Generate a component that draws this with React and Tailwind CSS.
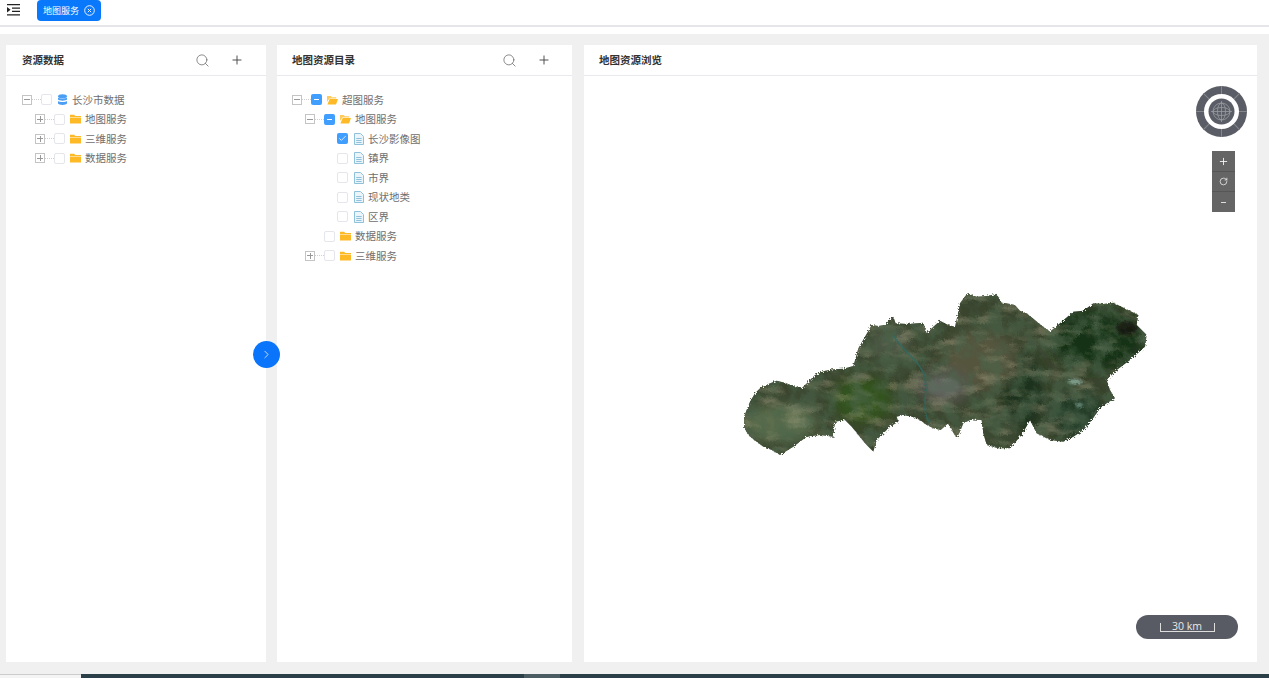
import React from "react";
import { Search, Plus, Check, ChevronRight, RotateCw } from "lucide-react";

const cjk = "font-['Noto_Sans_CJK_SC','Noto_Sans',sans-serif]";

const sourceTree = [
  {
    label: "长沙市数据",
    icon: "db",
    open: true,
    children: [
      { label: "地图服务", icon: "folder", closed: true },
      { label: "三维服务", icon: "folder", closed: true },
      { label: "数据服务", icon: "folder", closed: true },
    ],
  },
];

const catalogTree = [
  {
    label: "超图服务",
    icon: "open",
    open: true,
    state: "half",
    children: [
      {
        label: "地图服务",
        icon: "open",
        open: true,
        state: "half",
        children: [
          { label: "长沙影像图", icon: "file", state: "on", leaf: true },
          { label: "镇界", icon: "file", leaf: true },
          { label: "市界", icon: "file", leaf: true },
          { label: "现状地类", icon: "file", leaf: true },
          { label: "区界", icon: "file", leaf: true },
        ],
      },
      { label: "数据服务", icon: "folder", leaf: true },
      { label: "三维服务", icon: "folder", closed: true },
    ],
  },
];

const outline =
  "42,410 52,385 60,365 75,340 90,325 115,312 140,302 165,308 190,318 215,325 235,305 255,285 285,272 310,268 340,266 370,258 378,230 385,205 405,170 425,135 445,138 465,135 478,120 490,110 497,130 535,132 580,128 590,160 610,140 630,122 655,135 675,140 684,100 690,70 712,40 740,50 770,48 800,42 815,68 830,70 855,75 870,92 890,100 925,128 960,155 995,125 1030,95 1060,92 1090,70 1120,72 1150,68 1190,88 1225,105 1220,135 1250,165 1245,200 1200,240 1160,270 1130,300 1140,330 1155,355 1130,370 1110,385 1085,420 1060,450 1030,470 1000,485 960,480 920,460 900,420 875,465 840,505 805,505 770,495 760,460 755,420 725,418 700,430 690,455 680,475 665,450 655,430 632,450 610,445 590,435 570,420 545,410 520,405 500,410 505,425 480,440 460,460 440,480 430,515 405,490 385,465 365,440 345,420 315,425 310,470 270,465 230,470 190,500 150,525 125,510 100,500 80,485 60,470 42,445";

const DbIcon = () => (
  <svg width="11" height="12" viewBox="0 0 11 12" fill="#4a9ff5">
    <ellipse cx="5.5" cy="2.2" rx="4.5" ry="2" />
    <path d="M1 3.6c1 1.3 8 1.3 9 0v2c-1 1.4-8 1.4-9 0z" />
    <path d="M1 7c1 1.3 8 1.3 9 0v2.6c-.6 1.9-8.4 1.9-9 0z" />
  </svg>
);

const FolderIcon = () => (
  <svg width="11" height="10" viewBox="0 0 11 10" fill="#fdb926">
    <path d="M0 .8h4.2l1 1.2H11v.9H0z" />
    <path d="M0 3.5h11v6H0z" />
  </svg>
);

const OpenFolderIcon = () => (
  <svg width="11" height="10" viewBox="0 0 11 10" fill="#fdb926">
    <path d="M0 1h3.8l1 1.2h4.4v1.2H2.4L0 7z" opacity=".75" />
    <path d="M2.7 4H11L9 9.5H.4z" />
  </svg>
);

const FileIcon = () => (
  <svg width="10" height="12" viewBox="0 0 10 12" fill="#eaf4f9" stroke="#8fc2da" strokeWidth="1">
    <path d="M.5.5h6l3 3v8h-9z" />
    <path d="M2.2 5.5h5.4M2.2 7.5h5.4M2.2 9.5h5.4" fill="none" />
  </svg>
);

const icons = {
  db: <DbIcon />,
  folder: <FolderIcon />,
  open: <OpenFolderIcon />,
  file: <FileIcon />,
};

const Expander = ({ open }) => (
  <span className="relative w-[10px] h-[10px] border border-[#c4c4c4] bg-white shrink-0">
    <span className="absolute left-[1px] right-[1px] top-[3.5px] h-px bg-[#999]" />
    {!open && <span className="absolute top-[1px] bottom-[1px] left-[3.5px] w-px bg-[#999]" />}
  </span>
);

const Checkbox = ({ state }) => {
  if (state === "on") {
    return (
      <span className="flex items-center justify-center w-[11px] h-[11px] rounded-[2px] bg-[#409eff] shrink-0">
        <Check size={9} strokeWidth={2} color="#fff" />
      </span>
    );
  }
  if (state === "half") {
    return (
      <span className="flex items-center justify-center w-[11px] h-[11px] rounded-[2px] bg-[#409eff] shrink-0">
        <span className="w-[5px] h-px bg-white" />
      </span>
    );
  }
  return <span className="w-[11px] h-[11px] rounded-[2px] border border-[#e4e6ec] bg-white shrink-0" />;
};

const TreeRows = ({ nodes, depth = 0 }) =>
  nodes.map((node) => (
    <React.Fragment key={node.label + depth}>
      <div className="flex items-center h-[19.5px]" style={{ paddingLeft: depth * 13 }}>
        {node.leaf ? (
          <span className="w-[18.5px] shrink-0" />
        ) : (
          <>
            <Expander open={node.open} />
            <span className="w-[8.5px] border-t border-dotted border-[#d0d0d0] shrink-0" />
          </>
        )}
        <Checkbox state={node.state} />
        <span className="flex justify-center w-[11px] ml-[5.5px] shrink-0">{icons[node.icon]}</span>
        <span className="ml-[4px] text-[10.5px] leading-none text-[#6e6e6e]">{node.label}</span>
      </div>
      {node.children && <TreeRows nodes={node.children} depth={depth + 1} />}
    </React.Fragment>
  ));

const Panel = ({ title, width, tools, headerClass = "pl-[15px] pr-[21px]", children }) => (
  <section className={`relative flex flex-col bg-white ${width}`}>
    <header className={`flex items-center justify-between h-[31px] border-b border-[#e8e8ee] shrink-0 ${headerClass}`}>
      <h2 className="text-[10.5px] font-bold text-[#333]">{title}</h2>
      {tools && (
        <div className="flex items-center gap-[20px]">
          <Search size={15} strokeWidth={1.2} color="#666" />
          <Plus size={14} strokeWidth={1.6} color="#444" />
        </div>
      )}
    </header>
    {children}
  </section>
);

const Compass = () => (
  <svg className="absolute right-[10px] top-[41px]" width="51" height="51" viewBox="0 0 51 51">
    <circle cx="25.5" cy="25.5" r="25.5" fill="#5a5d65" />
    {[0, 45, 90, 135, 180, 225, 270, 315].map((a) => (
      <line key={a} x1="25.5" y1="0" x2="25.5" y2="8" stroke="#85878c" strokeWidth="1" transform={`rotate(${a} 25.5 25.5)`} />
    ))}
    <circle cx="25.5" cy="25.5" r="17.5" fill="#fff" />
    <circle cx="25.5" cy="25.5" r="13" fill="#5a5d65" />
    <g fill="none" stroke="#9a9ca1" strokeWidth=".8">
      <circle cx="25.5" cy="25.5" r="8.5" />
      <ellipse cx="25.5" cy="25.5" rx="4" ry="8.5" />
      <ellipse cx="25.5" cy="25.5" rx="8.5" ry="4" />
      <path d="M25.5 15v21M15 25.5h21" />
    </g>
  </svg>
);

const ZoomBar = () => (
  <div className="absolute right-[22px] top-[106px] flex flex-col w-[23px] bg-[#656565] text-white divide-y divide-[#565656]">
    <span className="flex items-center justify-center h-[21px]">
      <Plus size={11} strokeWidth={1.8} />
    </span>
    <span className="flex items-center justify-center h-[20px]">
      <RotateCw size={9} strokeWidth={1.8} />
    </span>
    <span className="flex items-center justify-center h-[20px]">
      <span className="w-[5px] h-px bg-[#ddd]" />
    </span>
  </div>
);

const ScaleBar = () => (
  <div className="absolute right-[19px] bottom-[23px] flex justify-center w-[102px] h-[24px] rounded-full bg-[#585b63]">
    <div className="w-[55px] h-[9px] mt-[8px] border-x border-b border-[#ddd] flex justify-center">
      <span className="text-[10.5px] leading-none text-[#e8e8e8] -mt-[2px] font-['Open_Sans',sans-serif]">30 km</span>
    </div>
  </div>
);

const MapImage = () => (
  <svg className="absolute left-[146px] top-[235px]" width="430" height="185" viewBox="0 0 1290 555">
    <defs>
      <clipPath id="region">
        <polygon points={outline} />
      </clipPath>
      <filter id="rough" x="-2%" y="-2%" width="104%" height="104%">
        <feTurbulence type="fractalNoise" baseFrequency="0.2" numOctaves="2" seed="4" />
        <feDisplacementMap in="SourceGraphic" scale="12" />
      </filter>
      <filter id="terrain" x="0" y="0" width="100%" height="100%">
        <feTurbulence type="fractalNoise" baseFrequency="0.012 0.03" numOctaves="4" seed="11" />
        <feColorMatrix values="0 0 0 0 0.48  0 0 0 0 0.44  0 0 0 0 0.3  3.4 0 0 0 -1.6" />
      </filter>
      <filter id="shade" x="0" y="0" width="100%" height="100%">
        <feTurbulence type="fractalNoise" baseFrequency="0.022 0.018" numOctaves="4" seed="23" />
        <feColorMatrix values="0 0 0 0 0.07  0 0 0 0 0.13  0 0 0 0 0.07  3.2 0 0 0 -1.2" />
      </filter>
      <filter id="soft" x="-60%" y="-60%" width="220%" height="220%">
        <feGaussianBlur stdDeviation="18" />
      </filter>
      <filter id="softer" x="-60%" y="-60%" width="220%" height="220%">
        <feGaussianBlur stdDeviation="5" />
      </filter>
    </defs>
    <g filter="url(#rough)">
      <g clipPath="url(#region)">
        <rect width="1290" height="555" fill="#3a452e" />
        <g filter="url(#soft)">
          <ellipse cx="150" cy="430" rx="110" ry="55" fill="#5c6e4e" />
          <ellipse cx="400" cy="360" rx="90" ry="70" fill="#33521f" />
          <ellipse cx="1100" cy="180" rx="140" ry="90" fill="#173019" />
          <ellipse cx="880" cy="340" rx="60" ry="120" fill="#1e301c" />
          <ellipse cx="1040" cy="400" rx="80" ry="70" fill="#223a26" />
          <ellipse cx="750" cy="240" rx="110" ry="90" fill="#55543c" />
          <ellipse cx="640" cy="320" rx="80" ry="55" fill="#575750" />
          <ellipse cx="480" cy="190" rx="60" ry="50" fill="#4e5844" />
          <ellipse cx="800" cy="440" rx="70" ry="50" fill="#3a4a30" />
        </g>
        <rect width="1290" height="555" filter="url(#terrain)" opacity=".35" />
        <rect width="1290" height="555" filter="url(#shade)" opacity=".6" />
        <ellipse cx="1190" cy="145" rx="32" ry="22" fill="#15170f" opacity=".8" filter="url(#softer)" />
        <ellipse cx="1035" cy="305" rx="22" ry="7" fill="#9fc4b8" opacity=".75" filter="url(#softer)" />
        <ellipse cx="1048" cy="375" rx="11" ry="7" fill="#9fc4b8" opacity=".6" filter="url(#softer)" />
        <ellipse cx="640" cy="320" rx="50" ry="30" fill="#7c8080" opacity=".3" filter="url(#softer)" />
        <ellipse cx="395" cy="292" rx="28" ry="14" fill="#8a8474" opacity=".4" filter="url(#softer)" />
        <path d="M490 165 C520 220 570 240 585 290 C595 340 570 390 600 430" fill="none" stroke="#2d6a62" strokeWidth="5" opacity=".75" />
      </g>
    </g>
  </svg>
);

export default function App() {
  return (
    <div className={`flex flex-col h-[678px] overflow-hidden bg-[#f0f0f0] ${cjk}`}>
      <div className="bg-white h-[34px] shrink-0">
        <div className="flex items-start h-[27px] border-b-2 border-[#e6e6ea]">
          <svg className="ml-[7px] mt-[4px]" width="13" height="12" viewBox="0 0 13 12" fill="#222">
            <path d="M0 0h13v1.3H0zM5 3.4h8v1.3H5zM5 6.8h8v1.3H5zM0 10.2h13v1.3H0zM0 3l3.6 2.8L0 8.6z" />
          </svg>
          <div className="flex items-center gap-[5px] ml-[17px] h-[21px] pl-[6px] w-[64px] rounded-[4px] bg-[#0a78fa] text-white">
            <span className="text-[9px] leading-none whitespace-nowrap">地图服务</span>
            <svg width="11" height="11" viewBox="0 0 11 11" fill="none" stroke="#fff" strokeWidth=".9">
              <circle cx="5.5" cy="5.5" r="4.8" />
              <path d="M3.8 3.8l3.4 3.4M7.2 3.8l-3.4 3.4" />
            </svg>
          </div>
        </div>
      </div>

      <main className="flex flex-1 min-h-0 gap-[11px] pt-[11px] pb-[12px] pl-[6px] pr-[12px]">
        <Panel title="资源数据" width="w-[260px]" tools headerClass="pl-[16px] pr-[22px]">
          <div className="pt-[14px] pl-[16px]">
            <TreeRows nodes={sourceTree} />
          </div>
          <button className="absolute z-10 -right-[14px] top-[296px] flex items-center justify-center w-[27px] h-[27px] rounded-full bg-[#0a75fa]">
            <ChevronRight size={13} strokeWidth={1.6} color="#dbe9ff" />
          </button>
        </Panel>
        <Panel title="地图资源目录" width="w-[295px]" tools>
          <div className="pt-[14px] pl-[15px]">
            <TreeRows nodes={catalogTree} />
          </div>
        </Panel>
        <div className="flex flex-1 pl-px">
          <Panel title="地图资源浏览" width="flex-1">
            <Compass />
            <ZoomBar />
            <MapImage />
            <ScaleBar />
          </Panel>
        </div>
      </main>

      <footer className="flex h-[4px] shrink-0">
        <div className="w-[81px] bg-[#f4f4f4] border-t border-[#ccc]" />
        <div className="w-[443px] bg-[#2a3f47]" />
        <div className="w-[36px] bg-[#4b5c63]" />
        <div className="flex-1 bg-[#2a3f47]" />
      </footer>
    </div>
  );
}
